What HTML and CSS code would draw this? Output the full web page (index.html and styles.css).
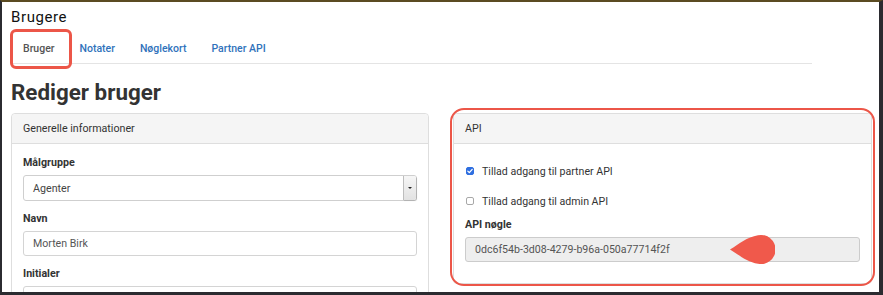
FILE: index.html
```html
<!DOCTYPE html>
<html lang="da">
<head>
<meta charset="utf-8">
<title>Brugere</title>
<link rel="stylesheet" href="styles.css">
</head>
<body>
<div class="frame">
  <div class="page">
    <div class="app-title">Brugere</div>
    <ul class="tabs">
      <li class="tab active"><span>Bruger</span></li>
      <li class="tab"><span>Notater</span></li>
      <li class="tab"><span>Nøglekort</span></li>
      <li class="tab"><span>Partner API</span></li>
    </ul>
    <h1 class="heading">Rediger bruger</h1>
    <div class="columns">
      <div class="panel">
        <div class="panel-head">Generelle informationer</div>
        <div class="panel-body">
          <div class="group">
            <label class="label">Målgruppe</label>
            <div class="select">
              <span class="select-text">Agenter</span>
              <span class="select-btn"><span class="caret"></span></span>
            </div>
          </div>
          <div class="group">
            <label class="label">Navn</label>
            <div class="input">Morten Birk</div>
          </div>
          <div class="group">
            <label class="label">Initialer</label>
            <div class="input"></div>
          </div>
        </div>
      </div>
      <div class="panel api-panel">
        <div class="panel-head">API</div>
        <div class="panel-body">
          <div class="check-row">
            <span class="box checked"><svg viewBox="0 0 8 8" width="8" height="8"><path d="M1.8 4.1 L3.3 5.6 L6.2 2.4" fill="none" stroke="#fff" stroke-width="1.3" stroke-linecap="round" stroke-linejoin="round"/></svg></span>
            <span class="check-text">Tillad adgang til partner API</span>
          </div>
          <div class="check-row">
            <span class="box"></span>
            <span class="check-text">Tillad adgang til admin API</span>
          </div>
          <div class="group last">
            <label class="label">API nøgle</label>
            <div class="input readonly">0dc6f54b-3d08-4279-b96a-050a77714f2f
              <svg class="pointer" viewBox="0 0 46 32" width="46" height="32"><path d="M1 15.5 C10 10 18 3 29 1.2 A14.6 14.6 0 1 1 29 29.8 C18 28 10 21 1 15.5 Z" fill="#f0594b"/></svg>
            </div>
          </div>
        </div>
        <div class="annotation"></div>
      </div>
    </div>
  </div>
</div>
</body>
</html>
```

FILE: styles.css
```css
* { box-sizing: border-box; }
html, body { margin: 0; padding: 0; background: #2a2a2f; }
body { font-family: Roboto, "Liberation Sans", Arial, sans-serif; color: #333; }

.frame {
  width: 883px;
  height: 295px;
  background: #fff;
  border-top: 2px solid #5b4b22;
  border-left: 2px solid #2b2b30;
  border-right: 4px solid #2b2b30;
  border-bottom: 3px solid #2b2b30;
  overflow: hidden;
}
.page { padding-left: 9px; }

.app-title {
  margin-top: 6px;
  font-size: 15px;
  line-height: 18px;
  letter-spacing: 0.6px;
  color: #111;
}

.tabs {
  list-style: none;
  margin: 7px 0 0 0;
  padding: 0;
  width: 801px;
  display: flex;
  border-bottom: 1px solid #e4e4e4;
  height: 31px;
}
.tab {
  position: relative;
  padding: 1px 12.5px 0 12.5px;
  font-size: 10.5px;
  font-weight: 500;
  line-height: 30px;
  color: #2f72bb;
}
.tab.active { color: #555; padding-left: 12px; }
.tab.active::after {
  content: "";
  position: absolute;
  left: -1px;
  top: -4px;
  width: 56px;
  height: 34px;
  border: 3px solid #ec5648;
  border-radius: 6px;
}

.heading {
  margin: 14px 0 7px 0;
  font-size: 22.4px;
  line-height: 28px;
  font-weight: 700;
  color: #333;
}

.columns {
  display: flex;
  gap: 24px;
  width: 861px;
}
.panel {
  flex: 0 0 418px;
  border: 1px solid #dedede;
  border-radius: 4px;
  position: relative;
}
.api-panel { flex-basis: 419px; align-self: flex-start; }
.panel-head {
  height: 30px;
  background: #f5f5f5;
  border-bottom: 1px solid #dedede;
  border-radius: 4px 4px 0 0;
  padding-left: 11px;
  font-size: 10.7px;
  line-height: 29px;
  color: #333;
}
.panel-body { padding: 12px 11px 12px 11px; }

.group { margin-bottom: 11px; }
.group.last { margin-bottom: 9px; }
.label {
  display: block;
  font-size: 10.7px;
  font-weight: 700;
  line-height: 14px;
  margin-bottom: 5px;
  color: #333;
}
.select {
  height: 26px;
  border: 1px solid #cfcfcf;
  border-radius: 3px;
  display: flex;
  align-items: center;
  font-size: 10.7px;
  color: #444;
}
.select-text { flex: 1; padding-left: 9px; }
.select-btn {
  width: 13px;
  height: 100%;
  border-left: 1px solid #bdbdbd;
  background: linear-gradient(#f6f6f6, #e2e2e2);
  border-radius: 0 2px 2px 0;
  display: flex;
  align-items: center;
  justify-content: center;
  box-shadow: 1px 1px 1px rgba(0,0,0,0.15);
}
.caret {
  width: 0; height: 0;
  border-left: 2px solid transparent;
  border-right: 2px solid transparent;
  border-top: 2px solid #222;
}
.input {
  position: relative;
  height: 25px;
  border: 1px solid #d4d4d4;
  border-radius: 3px;
  padding-left: 9px;
  font-size: 10.6px;
  line-height: 23px;
  color: #555;
}
.input.readonly { background: #eeeeee; border-color: #cccccc; }
.pointer { position: absolute; left: 263px; top: -4px; }

.check-row {
  display: flex;
  align-items: center;
  height: 14px;
  margin: 8px 0 16px 0;
  font-size: 10.6px;
  color: #333;
}
.check-row + .check-row { margin-bottom: 10px; }
.box {
  width: 8px; height: 8px;
  border: 1px solid #a8a8a8;
  border-radius: 2px;
  margin: 0 8px 0 1px;
  background: #fff;
  display: flex;
}
.box.checked { background: #2f6fe0; border-color: #2f6fe0; }
.box svg { margin: -1px; }

.annotation {
  position: absolute;
  left: -4px;
  top: -6px;
  right: -4px;
  bottom: -3px;
  border: 2px solid #ec5648;
  border-radius: 14px;
  pointer-events: none;
}
```
